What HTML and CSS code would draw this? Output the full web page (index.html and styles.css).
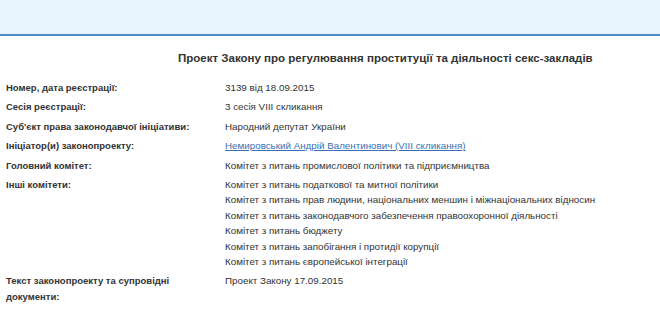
FILE: index.html
```html
<!DOCTYPE html>
<html lang="uk">
<head>
<meta charset="utf-8">
<link rel="stylesheet" href="styles.css">
</head>
<body>
<div class="topbar"></div>
<h1 class="title">Проект Закону про регулювання проституції та діяльності секс-закладів</h1>
<div class="card">
  <div class="row">
    <div class="label">Номер, дата реєстрації:</div>
    <div class="value">3139 від 18.09.2015</div>
  </div>
  <div class="row">
    <div class="label">Сесія реєстрації:</div>
    <div class="value">3 сесія VIII скликання</div>
  </div>
  <div class="row">
    <div class="label">Суб'єкт права законодавчої ініціативи:</div>
    <div class="value">Народний депутат України</div>
  </div>
  <div class="row">
    <div class="label">Ініціатор(и) законопроекту:</div>
    <div class="value"><a class="link" href="#">Немировський Андрій Валентинович (VIII скликання)</a></div>
  </div>
  <div class="row">
    <div class="label">Головний комітет:</div>
    <div class="value">Комітет з питань промислової політики та підприємництва</div>
  </div>
  <div class="row">
    <div class="label">Інші комітети:</div>
    <div class="value">
      <div>Комітет з питань податкової та митної політики</div>
      <div>Комітет з питань прав людини, національних меншин і міжнаціональних відносин</div>
      <div>Комітет з питань законодавчого забезпечення правоохоронної діяльності</div>
      <div>Комітет з питань бюджету</div>
      <div>Комітет з питань запобігання і протидії корупції</div>
      <div>Комітет з питань європейської інтеграції</div>
    </div>
  </div>
  <div class="row">
    <div class="label">Текст законопроекту та супровідні документи:</div>
    <div class="value">Проект Закону 17.09.2015</div>
  </div>
</div>
</body>
</html>
```
FILE: styles.css
```css
html, body {
  margin: 0;
  padding: 0;
  background: #ffffff;
}
body {
  font-family: "Liberation Sans", Arial, sans-serif;
  color: #333333;
}
.topbar {
  height: 34px;
  background: #e8f4fe;
  border-bottom: 2px solid #4a8cc4;
}
.title {
  margin: 0;
  padding: 14px 0 0 178px;
  font-size: 11.5px;
  line-height: 16px;
  font-weight: bold;
  color: #333333;
}
.card {
  padding: 12px 0 0 6px;
}
.row {
  display: grid;
  grid-template-columns: 219px 1fr;
  padding: 2px 0;
  line-height: 15.4px;
}
.label {
  font-weight: bold;
  font-size: 9.5px;
  padding-right: 19px;
}
.value {
  font-size: 9.8px;
  color: #333333;
}
.link {
  color: #3a70b2;
  text-decoration: underline;
}
```
